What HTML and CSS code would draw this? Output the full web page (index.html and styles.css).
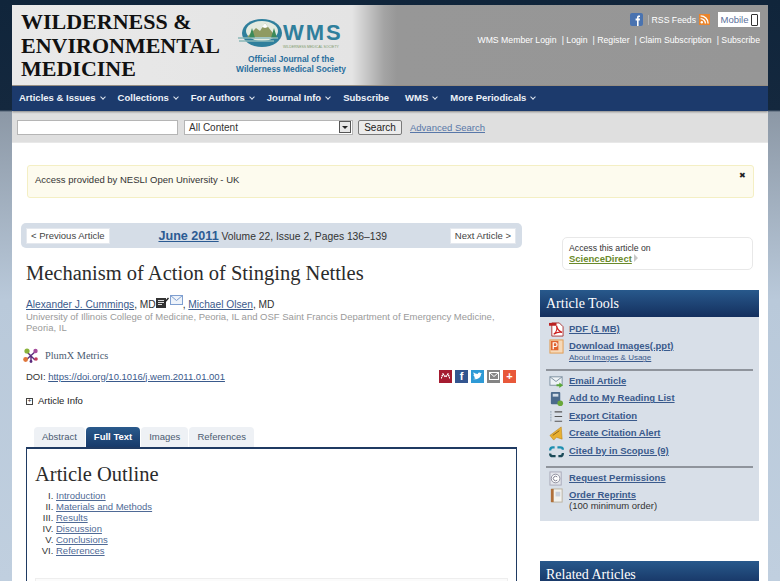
FILE: index.html
```html
<!DOCTYPE html>
<html lang="en">
<head>
    <meta charset="UTF-8">
    <meta name="viewport" content="width=device-width, initial-scale=1.0">
    <title>Mechanism of Action of Stinging Nettles</title>
    <link rel="stylesheet" href="styles.css">
</head>
<body>
    <div class="wrapper">
        <header class="masthead">
            <div class="journal-title">WILDERNESS &amp;<br>ENVIRONMENTAL<br>MEDICINE</div>
            <div class="society">
                <div class="society-mark">
                    <svg width="45" height="28" viewBox="0 0 45 28">
                        <ellipse cx="24" cy="14" rx="20" ry="14" fill="#2f7f9c"/>
                        <ellipse cx="24" cy="12" rx="16" ry="10" fill="#e3ebe0"/>
                        <path d="M9 18 L18 9 L22 12 L27 4 L38 18 Z" fill="#8f9a62"/>
                        <path d="M24 8 L27 4 L30 8 L27 9 Z" fill="#fff"/>
                        <path d="M11 19 L14 9 L17 19 Z M33 19 L36 9 L39 19 Z" fill="#3b8a5a"/>
                        <path d="M0 19 H40 M1 22 H36" stroke="#8bb8b8" stroke-width="1.4"/>
                    </svg>
                    <div class="wms-word">
                        <span class="wms-text">WMS</span>
                        <span class="wms-sub">WILDERNESS MEDICAL SOCIETY</span>
                    </div>
                </div>
                <div class="society-line">Official Journal of the<br>Wilderness Medical Society</div>
            </div>
            <div class="top-links">
                <div class="top-row">
                    <svg class="icon-13" viewBox="0 0 13 13"><rect width="13" height="13" rx="2" fill="#4a73b0"/><path d="M7 13V7.4H5.6V5.6H7V4.4C7 3 7.8 2.4 9 2.4H10V4H9.2C8.7 4 8.6 4.2 8.6 4.7V5.6H10L9.8 7.4H8.6V13Z" fill="#fff"/></svg>
                    <span class="rss-label">RSS Feeds</span>
                    <svg class="icon-11" viewBox="0 0 11 11"><rect width="11" height="11" fill="#e8842c"/><circle cx="2.8" cy="8.2" r="1.2" fill="#fff"/><path d="M1.6 4.6A4.8 4.8 0 0 1 6.4 9.4M1.6 1.9A7.5 7.5 0 0 1 9.1 9.4" fill="none" stroke="#fff" stroke-width="1.4"/></svg>
                    <span class="mobile-btn">Mobile<i class="phone"></i></span>
                </div>
                <div class="login-row">
                    <a>WMS Member Login</a><a>| Login</a><a>| Register</a><a>| Claim Subscription</a><a>| Subscribe</a>
                </div>
            </div>
        </header>

        <nav class="main-nav">
            <a class="has-menu">Articles &amp; Issues</a>
            <a class="has-menu">Collections</a>
            <a class="has-menu">For Authors</a>
            <a class="has-menu">Journal Info</a>
            <a class="plain">Subscribe</a>
            <a class="has-menu">WMS</a>
            <a class="has-menu">More Periodicals</a>
        </nav>

        <div class="search-bar">
            <input class="search-input" type="text">
            <div class="search-select">All Content<span class="select-arrow"></span></div>
            <button class="search-btn">Search</button>
            <a class="advanced">Advanced Search</a>
        </div>

        <div class="content">
            <div class="access-notice">
                <span>Access provided by NESLI Open University - UK</span>
                <span class="notice-close">&#10006;</span>
            </div>

            <div class="columns">
                <main class="article">
                    <div class="article-pager">
                        <a class="pager-btn">&lt; Previous Article</a>
                        <div class="issue-info"><a class="issue-date">June 2011</a> Volume 22, Issue 2, Pages 136&ndash;139</div>
                        <a class="pager-btn">Next Article &gt;</a>
                    </div>

                    <h1 class="article-title">Mechanism of Action of Stinging Nettles</h1>

                    <div class="authors">
                        <a>Alexander J. Cummings</a>, MD<svg class="icon-note" viewBox="0 0 13 11"><rect y="1" width="10" height="10" fill="#333"/><path d="M2 3.5H8M2 5.5H8M2 7.5H6" stroke="#ddd"/><path d="M8 5 L12 0.5 L13 1.5 L9 6Z" fill="#222"/></svg><svg class="icon-mail" viewBox="0 0 13 10"><rect x=".5" y=".5" width="12" height="9" fill="#eef3fa" stroke="#7f9fd0"/><path d="M.5 .5 L6.5 5.5 L12.5 .5" fill="none" stroke="#7f9fd0"/></svg>, <a>Michael Olsen</a>, MD
                    </div>
                    <div class="affiliation">University of Illinois College of Medicine, Peoria, IL and OSF Saint Francis Department of Emergency Medicine, Peoria, IL</div>

                    <div class="plumx">
                        <svg width="16" height="15" viewBox="0 0 16 15">
                            <path d="M3 3 L12 12 M13 3 L3 12 M8 7 V14" stroke="#5b2a7c" stroke-width="1.4"/>
                            <circle cx="4" cy="3" r="2.6" fill="#8bb33c"/>
                            <circle cx="12.5" cy="3" r="2.2" fill="#a64d9c"/>
                            <circle cx="2.6" cy="11.5" r="2.4" fill="#e0763a"/>
                            <circle cx="13" cy="11" r="1.8" fill="#c23b5a"/>
                            <circle cx="8" cy="13.5" r="1.4" fill="#5b2a7c"/>
                        </svg>
                        <span>PlumX Metrics</span>
                    </div>

                    <div class="doi-row">
                        <div>DOI: <a>https://doi.org/10.1016/j.wem.2011.01.001</a></div>
                        <div class="share">
                            <span class="share-mend">
                                <svg width="9" height="6" viewBox="0 0 9 6"><path d="M0 5.5 L2 1 L4.5 4 L7 1 L9 5.5" fill="none" stroke="#fff" stroke-width="1.4" stroke-dasharray="1.6 .7"/></svg>
                            </span>
                            <span class="share-fb">f</span>
                            <span class="share-tw">
                                <svg width="9" height="8" viewBox="0 0 9 8"><path d="M0 7 C3 8 8 6.5 8 2 L9 1 L7.8 1.2 C7 0 5 .2 4.8 2 C3 2 1.5 1.2 .7 .3 C.2 1.5 .7 2.6 1.3 3 L.5 2.9 C.6 4 1.3 4.6 2 4.8 L1.2 4.9 C1.5 5.6 2.2 6 2.8 6 C2 6.7 1 7 0 7Z" fill="#fff"/></svg>
                            </span>
                            <span class="share-mail">
                                <svg width="10" height="8" viewBox="0 0 10 8"><rect x=".5" y=".5" width="9" height="7" fill="none" stroke="#fff"/><path d="M.5 .5 L5 4.5 L9.5 .5" fill="none" stroke="#fff"/></svg>
                            </span>
                            <span class="share-plus">+</span>
                        </div>
                    </div>

                    <div class="article-info"><span class="expander">+</span>Article Info</div>

                    <div class="tabs">
                        <a class="tab">Abstract</a>
                        <a class="tab tab-active">Full Text</a>
                        <a class="tab">Images</a>
                        <a class="tab">References</a>
                    </div>
                    <div class="tab-panel">
                        <h2 class="outline-title">Article Outline</h2>
                        <ol class="outline">
                            <li><a>Introduction</a></li>
                            <li><a>Materials and Methods</a></li>
                            <li><a>Results</a></li>
                            <li><a>Discussion</a></li>
                            <li><a>Conclusions</a></li>
                            <li><a>References</a></li>
                        </ol>
                        <div class="next-box"></div>
                    </div>
                </main>

                <aside class="sidebar">
                    <div class="sd-box">
                        Access this article on<br>
                        <a class="sd-link">ScienceDirect</a><i class="sd-arrow"></i>
                    </div>

                    <section class="tools">
                        <h3 class="side-heading">Article Tools</h3>
                        <div class="tools-body">
                            <ul class="tool-group">
                                <li>
                                    <svg class="tool-icon" viewBox="0 0 16 16"><path d="M3 1H11L15 5V15H3Z" fill="#fff" stroke="#a33"/><path d="M5 13C8 11 9 7 8 4C9 8 11 10 14 11C10 10 8 11 5 13Z" fill="none" stroke="#c22" stroke-width="1.3"/><rect y="1" width="8" height="3" fill="#b22"/></svg>
                                    <a>PDF (1 MB)</a>
                                </li>
                                <li>
                                    <svg class="tool-icon" viewBox="0 0 16 16"><rect x="1" y="1" width="14" height="14" fill="#f6d9b8" stroke="#e09a50"/><rect x="2" y="2" width="8" height="10" fill="#e0642f"/><path d="M4.5 11V4H7.2C9 4 9 8 7.2 8H4.5" fill="none" stroke="#fff" stroke-width="1.3"/></svg>
                                    <div><a>Download Images(.ppt)</a><a class="tool-small">About Images &amp; Usage</a></div>
                                </li>
                            </ul>
                            <ul class="tool-group group-mid">
                                <li>
                                    <svg class="tool-icon" viewBox="0 0 16 16"><rect x="1" y="3" width="13" height="9" fill="#eef3f6" stroke="#7d8fa0"/><path d="M1 3 L7.5 8 L14 3" fill="none" stroke="#7d8fa0"/><path d="M8 11H11V9L15 12L11 15V13H8Z" fill="#5aa83a"/></svg>
                                    <a>Email Article</a>
                                </li>
                                <li>
                                    <svg class="tool-icon" viewBox="0 0 16 16"><rect x="2" y="1" width="10" height="13" rx="1" fill="#4a6a8c"/><rect x="4" y="3" width="6" height="3" fill="#cfdbe6"/><circle cx="12" cy="13" r="3" fill="#6aa83a"/></svg>
                                    <a>Add to My Reading List</a>
                                </li>
                                <li>
                                    <svg class="tool-icon" viewBox="0 0 16 16"><path d="M6 3H14M6 8H14M6 13H14" stroke="#555" stroke-width="1.2"/><path d="M2 2V14" stroke="#9ab" stroke-width="1.2" stroke-dasharray="2 1"/></svg>
                                    <a>Export Citation</a>
                                </li>
                                <li>
                                    <svg class="tool-icon" viewBox="0 0 16 16"><path d="M1 10 L13 1 L14 14 L8 12 L5 15 Z" fill="#e8b030" stroke="#b98218" stroke-width=".6"/><path d="M4 10 L11 5" stroke="#8a5f14"/></svg>
                                    <a>Create Citation Alert</a>
                                </li>
                                <li>
                                    <svg class="tool-icon" viewBox="0 0 16 16"><path d="M6 3.5H4C2 3.5 1.2 5 1.2 7M9 3.5H12C14 3.5 14.8 5 14.8 6" fill="none" stroke="#1d8fb0" stroke-width="2.4"/><path d="M7 13H4C2 13 1.2 11.5 1.2 10M10 13H12C14 13 14.8 11.5 14.8 9.5" fill="none" stroke="#1a4a58" stroke-width="2.4"/></svg>
                                    <a>Cited by in Scopus (9)</a>
                                </li>
                            </ul>
                            <ul class="tool-group">
                                <li>
                                    <svg class="tool-icon" viewBox="0 0 16 16"><rect x="1" y="1" width="12" height="14" fill="#e4e6ec" stroke="#a8a8b8"/><circle cx="7" cy="8" r="4.6" fill="#fff" stroke="#8a8a9a"/><path d="M8.8 6.4A2.4 2.4 0 1 0 8.8 9.6" fill="none" stroke="#77778a"/></svg>
                                    <a>Request Permissions</a>
                                </li>
                                <li>
                                    <svg class="tool-icon" viewBox="0 0 16 16"><rect x="3" y="1" width="11" height="14" fill="#f2f2ee" stroke="#b8b0a0"/><rect x="2" y="1" width="3" height="14" fill="#b0703a"/><rect x="7" y="4" width="5" height="5" fill="#c8d0dc"/></svg>
                                    <div><a>Order Reprints</a><span class="tool-note">(100 minimum order)</span></div>
                                </li>
                            </ul>
                        </div>
                    </section>

                    <section class="related">
                        <h3 class="side-heading">Related Articles</h3>
                    </section>
                </aside>
            </div>
        </div>
    </div>
</body>
</html>
```

FILE: styles.css
```css
* {
    margin: 0;
    padding: 0;
    box-sizing: border-box;
}

html, body {
    height: 581px;
    overflow: hidden;
}

body {
    font-family: 'Liberation Sans', Arial, sans-serif;
    font-size: 10px;
    color: #333;
    background: linear-gradient(180deg, #10253b 0, #14283e 110px, #8c98a6 112px, #b9c9da 300px, #c0cfdf 581px);
    padding-top: 5px;
}

a {
    color: #3a5a8c;
    text-decoration: underline;
}

.wrapper {
    width: 756px;
    margin: 0 auto;
    background: #fff;
    height: 576px;
    overflow: hidden;
}

/* header */
.masthead {
    display: flex;
    height: 81px;
    padding: 5px 8px 0 9px;
    background: linear-gradient(90deg, #e9e9e9 0, #e4e4e4 340px, #a4a4a4 372px, #979797 385px, #969696 100%);
    border-bottom: 1px solid #9b9287;
}

.journal-title {
    font-family: 'Liberation Serif', serif;
    font-weight: bold;
    font-size: 22px;
    line-height: 23.5px;
    color: #111;
    width: 208px;
    flex: none;
}

.society {
    padding-top: 9px;
    width: 124px;
    flex: none;
    text-align: center;
}

.society-mark {
    display: flex;
    justify-content: center;
    align-items: flex-start;
    height: 28px;
}

.wms-word {
    display: flex;
    flex-direction: column;
    width: 61px;
    text-align: left;
}

.wms-text {
    font-size: 22px;
    line-height: 25px;
    font-weight: bold;
    color: #2f7f9c;
    letter-spacing: 2px;
    margin-top: 1px;
}

.wms-sub {
    font-size: 3.5px;
    line-height: 4px;
    color: #7c9a6a;
    white-space: nowrap;
}

.society-line {
    font-size: 8.4px;
    line-height: 10px;
    font-weight: bold;
    color: #2a6f9e;
    margin-top: 7px;
    white-space: nowrap;
}

.top-links {
    flex: 1;
    color: #fff;
    font-size: 8.7px;
}

.top-row {
    display: flex;
    justify-content: flex-end;
    align-items: center;
    height: 15px;
    margin-top: 2px;
}

.icon-13 {
    width: 13px;
    height: 13px;
}

.icon-11 {
    width: 11px;
    height: 11px;
    margin-left: 3px;
}

.rss-label {
    border-left: 1px solid #b5b5b5;
    margin-left: 5px;
    padding-left: 3px;
}

.mobile-btn {
    display: flex;
    align-items: center;
    justify-content: center;
    gap: 2px;
    width: 42px;
    height: 15px;
    margin-left: 8px;
    background: #fff;
    color: #5a6f9c;
    font-size: 9.5px;
}

.phone {
    display: block;
    width: 7px;
    height: 12px;
    border: 1px solid #333;
    border-radius: 1px;
}

.login-row {
    display: flex;
    justify-content: flex-end;
    gap: 5px;
    margin-top: 8px;
    white-space: nowrap;
}

.login-row a {
    color: #fff;
    text-decoration: none;
}

/* nav */
.main-nav {
    display: flex;
    align-items: center;
    height: 25px;
    padding: 0 0 2px 7px;
    background: #1c3a6c;
    box-shadow: 0 1px 2px rgba(0, 0, 0, .4);
    position: relative;
    font-weight: bold;
    font-size: 9.5px;
}

.main-nav a {
    color: #eef2f8;
    text-decoration: none;
    white-space: nowrap;
}

.plain {
    margin-right: 16px;
}

.has-menu {
    margin-right: 12px;
}

.has-menu::after {
    content: "";
    display: inline-block;
    width: 3px;
    height: 3px;
    margin: 0 1px 2px 5px;
    border-right: 1px solid #dfe6f0;
    border-bottom: 1px solid #dfe6f0;
    transform: rotate(45deg);
}

/* search */
.search-bar {
    display: flex;
    align-items: center;
    height: 32px;
    padding: 1px 0 0 5px;
    background: #dfdfdf;
    border-bottom: 1px solid #e8e8e8;
}

.search-input {
    width: 161px;
    height: 15px;
    background: #fff;
    border: 1px solid #b5b5b5;
}

.search-select {
    display: flex;
    justify-content: space-between;
    align-items: center;
    width: 169px;
    height: 15px;
    margin-left: 6px;
    padding: 0 1px 0 4px;
    background: #fff;
    border: 1px solid #b5b5b5;
    font-size: 10px;
    color: #333;
}

.select-arrow {
    position: relative;
    width: 12px;
    height: 12px;
    background: #e6e6e6;
    border: 1px solid #555;
}

.select-arrow::after {
    content: "";
    position: absolute;
    left: 2px;
    top: 4px;
    border: 3px solid transparent;
    border-top: 3px solid #222;
}

.search-btn {
    width: 44px;
    height: 15px;
    margin-left: 5px;
    background: #ececec;
    border: 1px solid #7a7a7a;
    border-radius: 2px;
    font-family: inherit;
    font-size: 10px;
    color: #222;
}

.advanced {
    margin-left: 8px;
    font-size: 9.5px;
    color: #5877a8;
}

/* content */
.content {
    padding: 22px 9px 0 9px;
}

.access-notice {
    display: flex;
    justify-content: space-between;
    align-items: flex-start;
    height: 33px;
    margin: 0 5px 0 6px;
    padding: 8px 7px 0 7px;
    background: #fdfbee;
    border: 1px solid #f4efc4;
    border-radius: 3px;
    font-size: 9.5px;
    line-height: 12px;
}

.notice-close {
    margin-top: -4px;
    font-size: 8px;
    color: #222;
}

.columns {
    display: flex;
    gap: 18px;
    margin-top: 25px;
}

.article {
    width: 501px;
    flex: none;
}

.article-pager {
    display: flex;
    justify-content: space-between;
    align-items: center;
    height: 25px;
    padding: 0 6px 0 5px;
    background: #d5dde7;
    border-radius: 5px;
}

.pager-btn {
    height: 16px;
    padding: 0 4px;
    background: #fff;
    border: 1px solid #e4e8ee;
    color: #444;
    font-size: 9.5px;
    line-height: 14px;
    text-decoration: none;
}

.issue-info {
    margin-right: 14px;
    font-size: 10.3px;
    color: #333;
}

.issue-date {
    font-size: 12.6px;
    font-weight: bold;
    color: #2c5b93;
}

.article-title {
    margin: 14px 0 0 5px;
    font-family: 'Liberation Serif', Georgia, serif;
    font-weight: normal;
    font-size: 20.5px;
    line-height: 22px;
    color: #2b2b2b;
}

.authors {
    margin: 11px 0 0 5px;
    font-size: 10.2px;
    line-height: 13px;
}

.icon-note {
    width: 13px;
    height: 11px;
}

.icon-mail {
    width: 13px;
    height: 10px;
    margin: 0 0 3px 1px;
}

.affiliation {
    margin: 0 0 0 5px;
    font-size: 9.5px;
    line-height: 11px;
    color: #9a9a9a;
}

.plumx {
    display: flex;
    align-items: center;
    gap: 6px;
    margin: 15px 0 0 2px;
    height: 15px;
    font-family: 'Liberation Serif', serif;
    font-size: 10.3px;
    color: #4a5a70;
}

.doi-row {
    display: flex;
    justify-content: space-between;
    align-items: center;
    margin: 6px 0 0 5px;
    height: 14px;
    font-size: 9.5px;
}

.share {
    display: flex;
    gap: 3px;
    margin-right: 6px;
}

.share span {
    display: flex;
    align-items: center;
    justify-content: center;
    width: 13px;
    height: 13px;
    color: #fff;
    font-weight: bold;
    font-size: 11px;
}

.share-mend { background: #a51b30; }
.share-fb { background: #33558f; }
.share-tw { background: #2e9ad6; }
.share-mail { background: #848484; }
.share-plus { background: #e8583a; }

.article-info {
    display: flex;
    align-items: center;
    margin: 12px 0 0 5px;
    font-size: 9.5px;
    line-height: 12px;
    color: #222;
}

.expander {
    display: flex;
    align-items: center;
    justify-content: center;
    width: 7px;
    height: 7px;
    margin-right: 5px;
    border: 1px solid #444;
    font-size: 7px;
    line-height: 6px;
}

.tabs {
    display: flex;
    gap: 1px;
    margin: 20px 0 0 13px;
    height: 20px;
}

.tab {
    padding: 0 8px;
    background: #eef1f5;
    border-radius: 4px 4px 0 0;
    font-size: 9.5px;
    line-height: 20px;
    color: #4a5a70;
    text-decoration: none;
}

.tab-active {
    background: linear-gradient(180deg, #2a5a8c, #173a6a);
    color: #fff;
    font-weight: bold;
}

.tab-panel {
    margin: 0 5px;
    height: 200px;
    padding: 13px 8px 0 8px;
    border: 1px solid #1f3a62;
    border-top-width: 2px;
    background: #fff;
}

.outline-title {
    font-family: 'Liberation Serif', Georgia, serif;
    font-weight: normal;
    font-size: 20.5px;
    line-height: 24px;
    color: #2b2b2b;
}

.outline {
    list-style: upper-roman;
    margin: 4px 0 0 21px;
    font-size: 9.5px;
    line-height: 11px;
}

.outline a {
    color: #4f6a96;
}

.next-box {
    height: 20px;
    margin-top: 22px;
    border: 1px solid #eeeeee;
    background: #fbfbfb;
}

/* sidebar */
.sidebar {
    width: 219px;
    flex: none;
}

.sd-box {
    width: 191px;
    height: 33px;
    margin: 14px 0 0 22px;
    padding: 5px 6px;
    background: #fff;
    border: 1px solid #e8e8e8;
    border-radius: 5px;
    font-size: 8.7px;
    line-height: 10.5px;
}

.sd-link {
    font-size: 9.5px;
    font-weight: bold;
    color: #6a8a2a;
}

.sd-arrow {
    display: inline-block;
    margin-left: 2px;
    border: 4px solid transparent;
    border-left: 4px solid #c8c8c8;
    border-right: 0;
}

.tools {
    margin-top: 20px;
}

.side-heading {
    height: 27px;
    padding-left: 6px;
    background: linear-gradient(180deg, #28598c, #142f5e);
    color: #fff;
    font-family: 'Liberation Serif', Georgia, serif;
    font-weight: normal;
    font-size: 14px;
    line-height: 27px;
}

.tools-body {
    padding: 0 6px 9px 6px;
    background: #d8dfe8;
}

.tool-group {
    list-style: none;
    padding: 5px 0 3px 3px;
    border-bottom: 2px solid #8f949c;
}

.tool-group:last-child {
    border-bottom: 0;
    padding: 3px 0 0 3px;
}

.tool-group li {
    display: flex;
    gap: 5px;
    padding-bottom: 2px;
    min-height: 17px;
    font-size: 9.5px;
    line-height: 13px;
}

.group-mid {
    padding-top: 3px;
    padding-bottom: 5px;
}

.tool-group.group-mid li {
    height: 17.4px;
}

.tool-group a {
    color: #3a5a8c;
    font-weight: bold;
}

.tool-icon {
    width: 15px;
    height: 15px;
    flex: none;
}

.tool-group .tool-small {
    display: block;
    font-size: 8px;
    font-weight: normal;
    line-height: 12px;
}

.tool-note {
    display: block;
    font-size: 9.5px;
    line-height: 9px;
    color: #333;
}

.related {
    margin-top: 40px;
}
```
